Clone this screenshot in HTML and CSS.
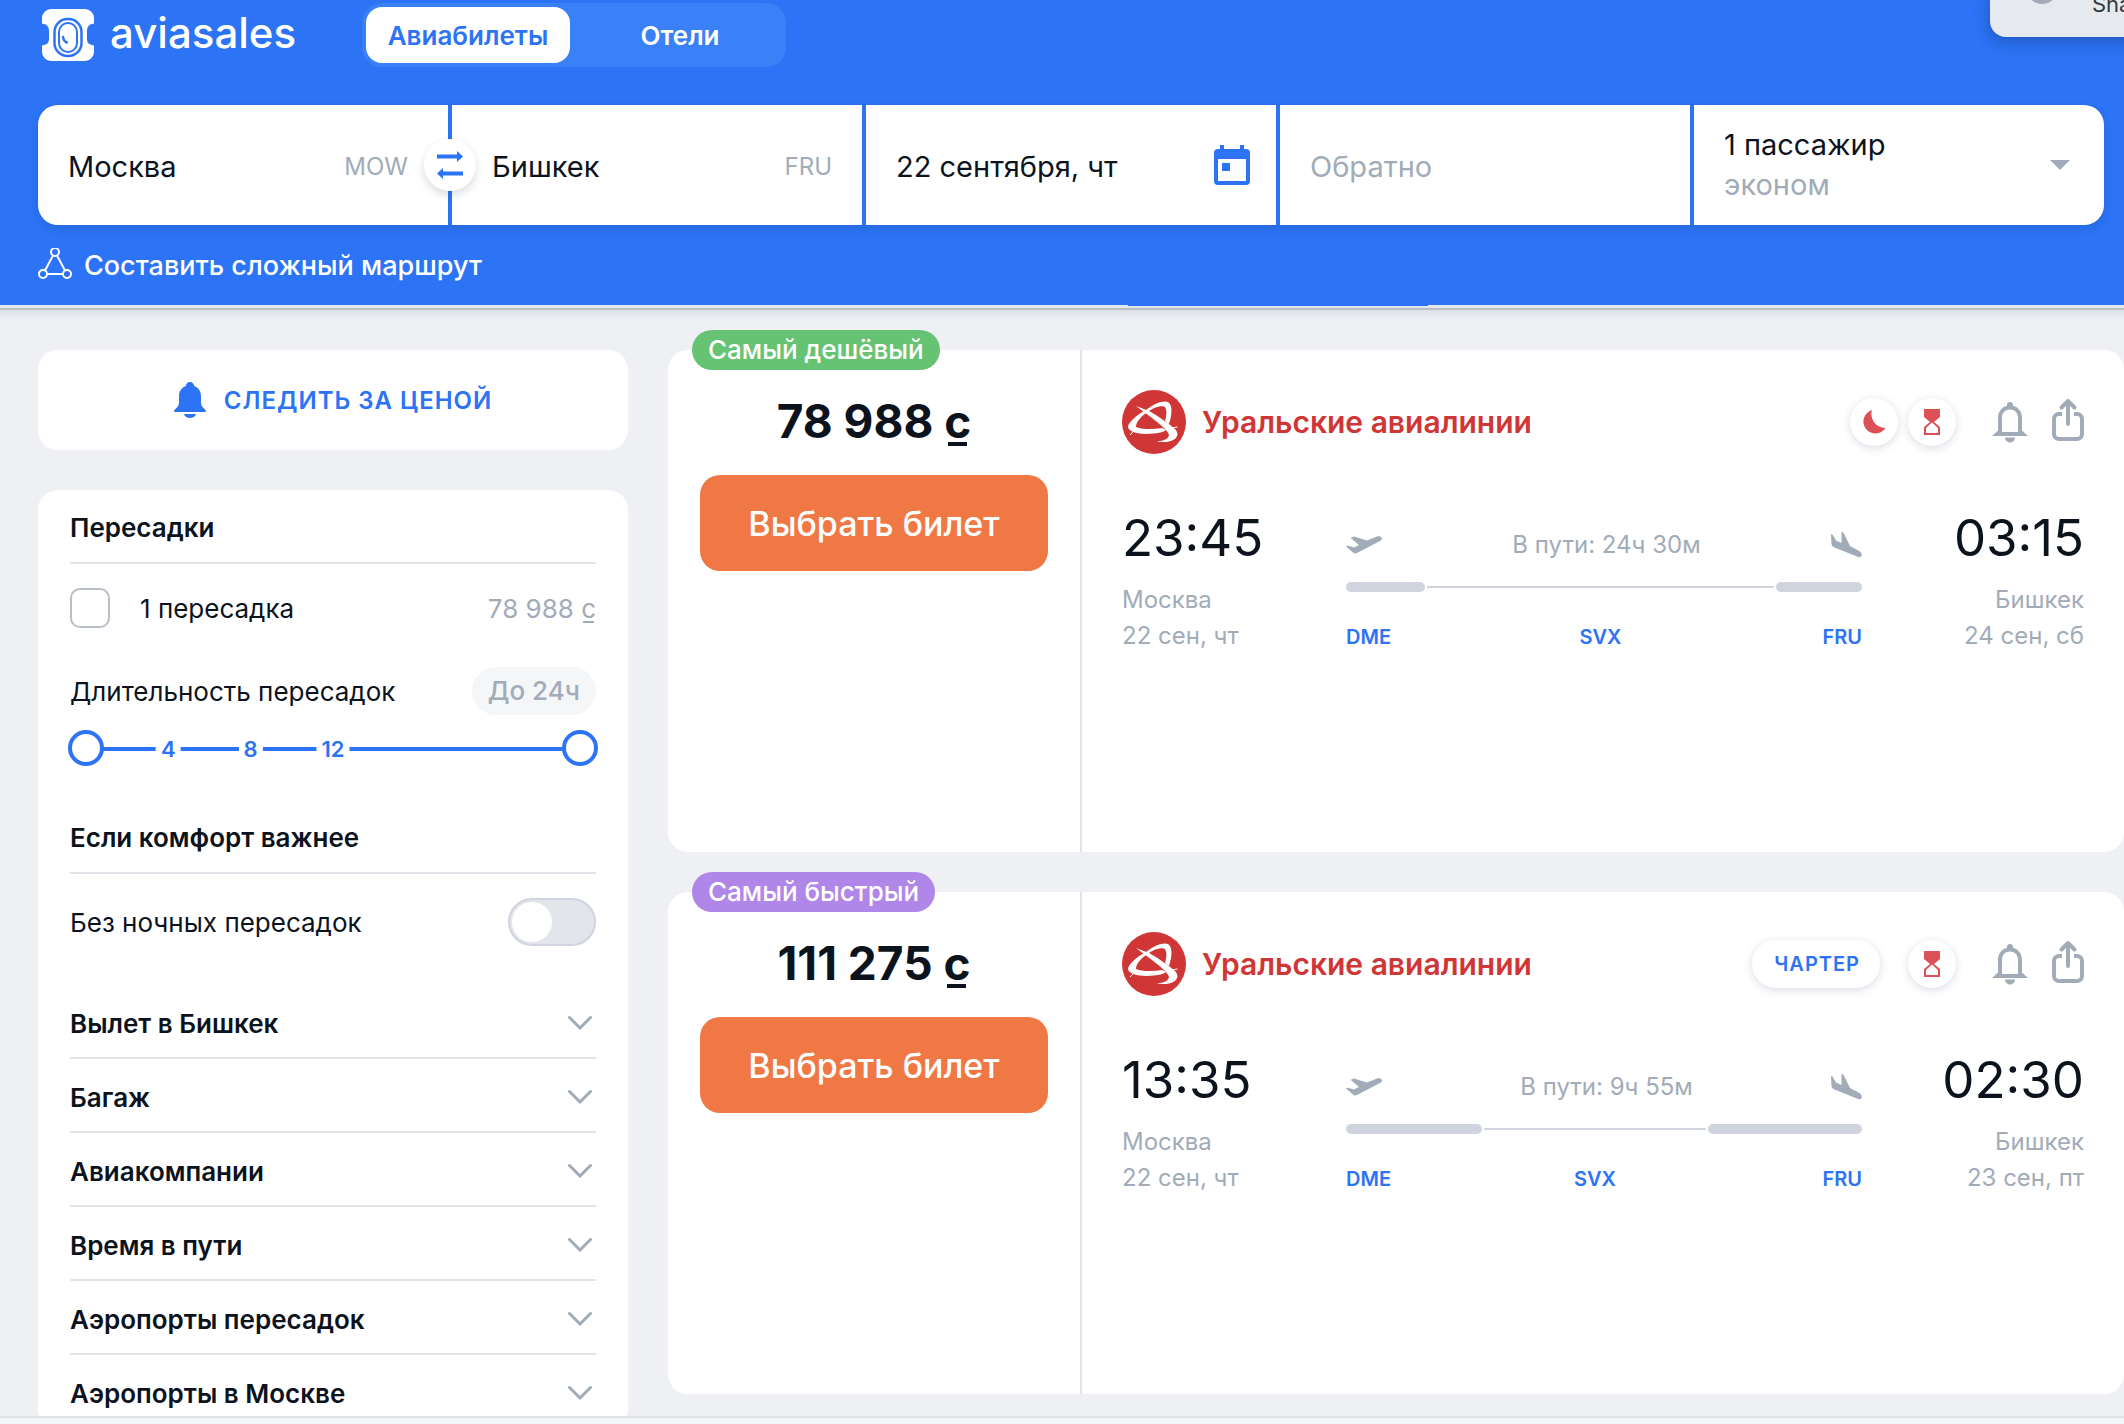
FILE: index.html
```html
<!DOCTYPE html>
<html lang="ru">
<head>
<meta charset="utf-8">
<meta name="viewport" content="width=device-width, initial-scale=1">
<title>Москва — Бишкек, авиабилеты</title>
<link rel="stylesheet" href="styles.css">
</head>
<body>
<svg class="sprite" aria-hidden="true">
  <symbol id="i-bell" viewBox="0 0 36 42">
    <path d="M18 1a3 3 0 0 1 3 3v3h-6V4a3 3 0 0 1 3-3z" fill="currentColor"/>
    <path fill-rule="evenodd" d="M18 4.500c7.500 0 12 5.500 12 12.500v12.500l6 5.500H0l6-5.500V17C6 10 10.500 4.500 18 4.500zM18 8.500c-5 0-8 3.500-8 8.500v14h16V17c0-5-3-8.500-8-8.500z" fill="currentColor"/>
    <path d="M13 36.500h10c0 2.500-2 5-5 5s-5-2.500-5-5z" fill="currentColor"/>
  </symbol>
  <symbol id="i-share" viewBox="0 0 32 44">
    <path d="M10 17H7a5 5 0 0 0-5 5v15a5 5 0 0 0 5 5h18a5 5 0 0 0 5-5V22a5 5 0 0 0-5-5h-3" fill="none" stroke="currentColor" stroke-width="4"/>
    <path d="M16 27V4M9.500 10.500L16 4l6.500 6.500" fill="none" stroke="currentColor" stroke-width="4" stroke-linecap="round" stroke-linejoin="round"/>
  </symbol>
  <symbol id="i-hourglass" viewBox="0 0 16 26">
    <path d="M0 0h16v8l-6 5 6 5v8H0v-8l6-5-6-5z" fill="currentColor"/>
    <path d="M2 24h12v-5l-6-5.500L2 19z" fill="#fff"/>
  </symbol>
  <symbol id="i-moon" viewBox="0 0 24 24">
    <path d="M10 0A12 12 0 1 0 23.500 18 14 14 0 0 1 10 0z" fill="currentColor"/>
  </symbol>
  <symbol id="i-takeoff" viewBox="0 0 36 18">
    <path d="M0 10.500l2-.8 6 1.700 5-2.300L4.500 1.800 8 .5l13 4L31 .6c3-1 5 .2 5 2 0 1.200-1 2-2 2.500L11 17c-1.500.8-3 .6-4-.4z" fill="currentColor"/>
  </symbol>
  <symbol id="i-landing" viewBox="0 0 31 26">
    <path d="M0 2l1.500.5 3.500 6 5.500 2.500V0l2 .8L19 14l8.500 4.500c2.500 1.400 4 4 3 5.500-.8 1.600-2.500 1.400-4 .8L3.500 15.500C1.500 14.600.5 13 .4 11z" fill="currentColor"/>
  </symbol>
  <symbol id="i-chevron" viewBox="0 0 24 14">
    <path d="M1.500 1.500L12 12 22.500 1.500" fill="none" stroke="currentColor" stroke-width="3" stroke-linecap="round"/>
  </symbol>
  <symbol id="i-ural" viewBox="0 0 64 64">
    <circle cx="32" cy="32" r="32" fill="#d13636"/>
    <g fill="#fff">
      <path d="M14 16l13 5c9 5 19 12 26 18 5 5 2 11-6 12.500-5 1-9 .5-12-.5 7 0 11-2 12-6-1-5-11-12-17-17z"/>
      <path d="M24 20C14 25 6 33 6 37c1 6 14 8 26 6.500 6-.5 10-1.500 12-3.500l-4-2c-10 2-22 1-26-1 0-5 5-11 12-15z"/>
      <path d="M24 20c8-7 18-10 22-8 5 3 4 13 1 22l-4-3c2-6 2-13-1-14.500-4-1-12 1.500-16 5.500z"/>
    </g>
    <path d="M8 45l5-5.500M49 38l6.500-1" stroke="#fff" fill="none"/>
  </symbol>
</svg>

<div class="app">
  <header class="header">
    <div class="topbar">
      <a class="logo" href="#">
        <svg class="logo-mark" viewBox="0 0 52 52" aria-hidden="true">
          <path fill="#fff" d="M9 0h34a9 9 0 0 1 9 9v5.500c-6 1-7.500 3.500-7 11.500-.5 8 1 9.500 7 10.500V43a9 9 0 0 1-9 9H9a9 9 0 0 1-9-9v-6.500c6-1 7.500-2.500 7-10.500.5-8-1-10.500-7-11.500V9a9 9 0 0 1 9-9z"/>
          <rect x="12.500" y="10" width="27" height="37" rx="13" fill="none" stroke="#2c73f5" stroke-width="2.500"/>
          <rect x="17" y="14" width="18" height="29" rx="9" fill="none" stroke="#2c73f5" stroke-width="2"/>
          <path d="M21 28c.3 3 1.500 4.500 3.800 5.500" fill="none" stroke="#2c73f5" stroke-width="2.500" stroke-linecap="round"/>
        </svg>
        <span>aviasales</span>
      </a>
      <nav class="tabs">
        <a class="tab tab--active" href="#">Авиабилеты</a>
        <a class="tab" href="#">Отели</a>
      </nav>
    </div>

    <form class="search">
      <label class="field field--from">
        <input class="field-input" type="text" value="Москва" aria-label="Откуда">
        <span class="field-code">MOW</span>
      </label>
      <button class="swap" type="button" aria-label="Поменять местами">
        <svg viewBox="0 0 26 28" width="26" height="28" aria-hidden="true" fill="#2c73f5">
          <path d="M0 3.500h20V0l6 5.500-6 5.500V7.500H0zM26 20.500H6V17l-6 5.500L6 28v-3.500h20z"/>
        </svg>
      </button>
      <label class="field field--to">
        <input class="field-input" type="text" value="Бишкек" aria-label="Куда">
        <span class="field-code">FRU</span>
      </label>
      <label class="field">
        <input class="field-input" type="text" value="22 сентября, чт" aria-label="Туда">
        <svg viewBox="0 0 36 40" width="36" height="40" aria-hidden="true" fill="#2c73f5">
          <path fill-rule="evenodd" d="M6 0h4v4h16V0h4v4h2a4 4 0 0 1 4 4v28a4 4 0 0 1-4 4H4a4 4 0 0 1-4-4V8a4 4 0 0 1 4-4h2zM4 14v22h28V14zM8 18h8v8H8z"/>
        </svg>
      </label>
      <label class="field">
        <input class="field-input" type="text" placeholder="Обратно" aria-label="Обратно">
      </label>
      <button class="field passengers" type="button">
        <span class="passengers-text">
          <span>1 пассажир</span>
          <span class="passengers-class">эконом</span>
        </span>
        <svg viewBox="0 0 20 10" width="20" height="10" aria-hidden="true"><path d="M0 0h20L10 10z" fill="#a2abb8"/></svg>
      </button>
    </form>

    <a class="complex" href="#">
      <svg viewBox="0 0 34 34" width="34" height="34" aria-hidden="true" fill="none" stroke="#fff" stroke-width="2">
        <circle cx="17" cy="4" r="4"/><circle cx="5" cy="26" r="4"/><circle cx="29" cy="26" r="4"/>
        <path d="M15 7.500L7 22.500M19 7.500l8 15M9 26h16"/>
      </svg>
      <span>Составить сложный маршрут</span>
    </a>

    <aside class="toast">
      <svg class="toast-icon" viewBox="0 0 32 32" aria-hidden="true"><circle cx="16" cy="16" r="14" fill="none" stroke="#a4abb6" stroke-width="4"/></svg>
      <span>Sha</span>
    </aside>
  </header>
  <div class="header-edge"><div class="progress"></div></div>

  <main class="main">
    <section class="sidebar">
      <button class="follow" type="button">
        <svg viewBox="0 0 32 36" width="32" height="36" aria-hidden="true" fill="#2c73f5">
          <path d="M16 0c2.500 0 4 2 4.200 4C25 6 27 10 27 14v6c0 4 2 5.500 4.500 8 .8 1 .5 2-.5 2H1c-1 0-1.300-1-.5-2C3 25.500 5 24 5 20v-6c0-4 2-8 6.800-10C12 2 13.500 0 16 0z"/>
          <path d="M10 32h12c-1 5.300-11 5.300-12 0z"/>
        </svg>
        <span>СЛЕДИТЬ ЗА ЦЕНОЙ</span>
      </button>

      <div class="filters">
        <h2 class="filter-title">Пересадки</h2>
        <label class="check-row">
          <input class="check" type="checkbox">
          <span class="check-label">1 пересадка</span>
          <span class="check-price">78&nbsp;988&nbsp;<span class="som">с</span></span>
        </label>
        <div class="range-head">
          <span id="layover">Длительность пересадок</span>
          <span class="range-badge">До 24ч</span>
        </div>
        <div class="range" role="group" aria-labelledby="layover">
          <div class="range-line">
            <span class="range-tick" style="left:16.6667%">4</span>
            <span class="range-tick" style="left:33.3333%">8</span>
            <span class="range-tick" style="left:50%">12</span>
          </div>
          <input class="range-input" type="range" min="0" max="24" value="0" aria-label="От, часов">
          <input class="range-input" type="range" min="0" max="24" value="24" aria-label="До, часов">
        </div>

        <h2 class="filter-title">Если комфорт важнее</h2>
        <label class="toggle-row">
          <span>Без ночных пересадок</span>
          <input class="toggle" type="checkbox" role="switch">
        </label>

        <button class="accordion" type="button"><span>Вылет в Бишкек</span><svg><use href="#i-chevron"/></svg></button>
        <button class="accordion" type="button"><span>Багаж</span><svg><use href="#i-chevron"/></svg></button>
        <button class="accordion" type="button"><span>Авиакомпании</span><svg><use href="#i-chevron"/></svg></button>
        <button class="accordion" type="button"><span>Время в пути</span><svg><use href="#i-chevron"/></svg></button>
        <button class="accordion" type="button"><span>Аэропорты пересадок</span><svg><use href="#i-chevron"/></svg></button>
        <button class="accordion" type="button"><span>Аэропорты в Москве</span><svg><use href="#i-chevron"/></svg></button>
      </div>
    </section>

    <section class="tickets">
      <article class="ticket">
        <span class="label label--cheap">Самый дешёвый</span>
        <div class="offer">
          <div class="price">78&nbsp;988&nbsp;<span class="som">с</span></div>
          <button class="buy" type="button">Выбрать билет</button>
        </div>
        <div class="flight">
          <div class="flight-head">
            <svg class="carrier-logo" aria-hidden="true"><use href="#i-ural"/></svg>
            <h3 class="carrier">Уральские авиалинии</h3>
            <span class="tag tag--round"><svg class="tag-moon"><use href="#i-moon"/></svg></span>
            <span class="tag tag--round"><svg class="tag-hourglass"><use href="#i-hourglass"/></svg></span>
            <div class="actions">
              <button class="action" type="button" aria-label="Следить"><svg class="action-bell"><use href="#i-bell"/></svg></button>
              <button class="action" type="button" aria-label="Поделиться"><svg class="action-share"><use href="#i-share"/></svg></button>
            </div>
          </div>
          <div class="route">
            <div class="point">
              <div class="time">23:45</div>
              <div class="place">Москва</div>
              <div class="place">22 сен, чт</div>
            </div>
            <div class="path">
              <div class="path-head">
                <svg class="takeoff"><use href="#i-takeoff"/></svg>
                <span>В пути: 24ч 30м</span>
                <svg class="landing"><use href="#i-landing"/></svg>
              </div>
              <div class="track">
                <span class="leg" style="flex-grow:79"></span>
                <span class="stop" style="flex-grow:347"><span class="code">SVX</span></span>
                <span class="leg" style="flex-grow:86"></span>
              </div>
              <div class="codes"><span class="code">DME</span><span class="code">FRU</span></div>
            </div>
            <div class="point point--end">
              <div class="time">03:15</div>
              <div class="place">Бишкек</div>
              <div class="place">24 сен, сб</div>
            </div>
          </div>
        </div>
      </article>

      <article class="ticket">
        <span class="label label--fast">Самый быстрый</span>
        <div class="offer">
          <div class="price">111&nbsp;275&nbsp;<span class="som">с</span></div>
          <button class="buy" type="button">Выбрать билет</button>
        </div>
        <div class="flight">
          <div class="flight-head">
            <svg class="carrier-logo" aria-hidden="true"><use href="#i-ural"/></svg>
            <h3 class="carrier">Уральские авиалинии</h3>
            <span class="tag tag--text">ЧАРТЕР</span>
            <span class="tag tag--round"><svg class="tag-hourglass"><use href="#i-hourglass"/></svg></span>
            <div class="actions">
              <button class="action" type="button" aria-label="Следить"><svg class="action-bell"><use href="#i-bell"/></svg></button>
              <button class="action" type="button" aria-label="Поделиться"><svg class="action-share"><use href="#i-share"/></svg></button>
            </div>
          </div>
          <div class="route">
            <div class="point">
              <div class="time">13:35</div>
              <div class="place">Москва</div>
              <div class="place">22 сен, чт</div>
            </div>
            <div class="path">
              <div class="path-head">
                <svg class="takeoff"><use href="#i-takeoff"/></svg>
                <span>В пути: 9ч 55м</span>
                <svg class="landing"><use href="#i-landing"/></svg>
              </div>
              <div class="track">
                <span class="leg" style="flex-grow:136"></span>
                <span class="stop" style="flex-grow:222"><span class="code">SVX</span></span>
                <span class="leg" style="flex-grow:154"></span>
              </div>
              <div class="codes"><span class="code">DME</span><span class="code">FRU</span></div>
            </div>
            <div class="point point--end">
              <div class="time">02:30</div>
              <div class="place">Бишкек</div>
              <div class="place">23 сен, пт</div>
            </div>
          </div>
        </div>
      </article>
    </section>
  </main>
  <div class="bottom-edge"></div>
</div>
</body>
</html>
```
FILE: styles.css
```css
:root {
  --blue: #2c73f5;
  --ink: #0c131d;
  --muted: #a2abb8;
  --line: #e1e5ea;
  --page: #eef0f4;
  --track: #cfd4de;
}

* { box-sizing: border-box; }

body {
  margin: 0;
  background: var(--page);
  color: var(--ink);
  font-family: Inter, "Liberation Sans", sans-serif;
  font-size: 24px;
}

button, input {
  margin: 0;
  padding: 0;
  border: 0;
  background: none;
  color: inherit;
  font: inherit;
}

button { cursor: pointer; }
a { color: inherit; text-decoration: none; }
svg { display: block; flex: none; }
h2, h3 { margin: 0; font-size: inherit; }

.sprite { position: absolute; width: 0; height: 0; }

.app {
  display: flex;
  flex-direction: column;
  height: 100vh;
  overflow: hidden;
}

/* Header */
.header {
  position: relative;
  flex: none;
  padding: 3px 20px 0 38px;
  background: var(--blue);
  color: #fff;
}

.topbar { display: flex; align-items: center; }

.logo {
  display: flex;
  align-items: center;
  gap: 16px;
  width: 324px;
  padding-left: 4px;
  font-size: 42px;
  font-weight: 500;
  line-height: 48px;
}

.logo span { padding-bottom: 4px; }
.logo-mark { width: 52px; height: 52px; }

.tabs {
  display: flex;
  gap: 8px;
  padding: 4px;
  border-radius: 20px;
  background: #3a80f7;
}

.tab {
  width: 204px;
  padding-top: 2px;
  border-radius: 16px;
  font-size: 26px;
  font-weight: 600;
  line-height: 54px;
  text-align: center;
}

.tab--active { background: #fff; color: var(--blue); }

.search {
  position: relative;
  display: grid;
  grid-template-columns: repeat(5, 1fr);
  gap: 4px;
  margin-top: 38px;
  border-radius: 20px;
  box-shadow: 0 4px 8px rgba(20, 70, 130, 0.2);
}

.field {
  display: flex;
  align-items: center;
  min-width: 0;
  height: 120px;
  padding: 0 26px 0 30px;
  background: #fff;
  color: var(--ink);
  font-size: 29px;
}

.field--from { padding-right: 40px; border-radius: 20px 0 0 20px; }
.field--to { padding: 0 30px 0 40px; }

.field-input { flex: 1; min-width: 0; padding-top: 2px; outline: none; }
.field-input::placeholder { color: var(--muted); opacity: 1; }
.field-code { padding-top: 2px; color: var(--muted); font-size: 24px; }

.swap {
  position: absolute;
  top: 34px;
  left: calc(20% - 27px);
  display: grid;
  place-items: center;
  width: 52px;
  height: 52px;
  border-radius: 50%;
  background: #fff;
  box-shadow: 0 4px 8px rgba(20, 40, 70, 0.16);
}

.passengers {
  justify-content: space-between;
  padding: 0 34px 0 30px;
  border-radius: 0 20px 20px 0;
  text-align: left;
}

.passengers-text { display: grid; line-height: 40px; }
.passengers-class { color: var(--muted); }

.complex {
  display: inline-flex;
  align-items: center;
  gap: 12px;
  height: 80px;
  font-size: 27px;
  font-weight: 500;
}

.toast {
  position: absolute;
  top: -16px;
  right: -44px;
  display: flex;
  align-items: center;
  gap: 34px;
  width: 178px;
  height: 53px;
  padding: 0 0 14px 36px;
  border-radius: 16px;
  background: #e6e9ed;
  box-shadow: 0 4px 16px rgba(0, 20, 60, 0.3);
  color: #34373c;
  font-size: 22px;
}

.toast-icon {
  align-self: flex-start;
  width: 32px;
  height: 32px;
  margin-top: -12px;
}

.header-edge {
  flex: none;
  height: 15px;
  background: linear-gradient(#e4e7eb 3px, #b9bfc7 3px, #b9bfc7 5px, #dde1e6 5px, var(--page));
}

.progress {
  width: 300px;
  height: 1px;
  margin-left: 1128px;
  background: var(--blue);
}

/* Page body */
.main {
  display: flex;
  flex: 1;
  gap: 40px;
  min-height: 0;
  padding: 30px 0 0 38px;
  overflow: hidden;
}

.bottom-edge {
  flex: none;
  height: 8px;
  border-top: 2px solid #dfe2e8;
  background: #f4f5f8;
}

/* Sidebar */
.sidebar { flex: none; width: 590px; }

.follow {
  display: flex;
  align-items: center;
  justify-content: center;
  gap: 18px;
  width: 100%;
  height: 100px;
  border-radius: 20px;
  background: #fff;
  color: var(--blue);
  font-size: 24px;
  font-weight: 600;
  letter-spacing: 1px;
}

.filters {
  margin-top: 40px;
  padding: 0 32px;
  border-radius: 20px;
  background: #fff;
  font-size: 26px;
}

.filter-title {
  padding: 4px 0 0;
  border-bottom: 2px solid var(--line);
  font-weight: 600;
  line-height: 68px;
}

.check-row {
  display: flex;
  align-items: center;
  gap: 30px;
  height: 88px;
}

.check {
  appearance: none;
  width: 40px;
  height: 40px;
  border: 2px solid #b9bfc9;
  border-radius: 10px;
}

.check-label { flex: 1; }
.check-price { color: var(--muted); }

.som { position: relative; }

.som::after {
  content: "";
  position: absolute;
  right: 15%;
  bottom: 1px;
  left: 15%;
  height: 2px;
  background: currentColor;
}

.range-head {
  display: flex;
  align-items: center;
  justify-content: space-between;
  height: 78px;
}

.range-badge {
  padding: 0 16px;
  border-radius: 24px;
  background: #f5f6f8;
  color: var(--muted);
  font-weight: 500;
  line-height: 48px;
}

.range {
  display: grid;
  height: 36px;
  margin: 0 -2px 34px;
}

.range-line {
  grid-area: 1 / 1;
  position: relative;
  align-self: center;
  height: 4px;
  margin: 2px 18px 0;
  background: var(--blue);
}

.range-tick {
  position: absolute;
  top: 50%;
  padding: 0 5px;
  background: #fff;
  color: var(--blue);
  font-size: 22px;
  font-weight: 600;
  line-height: 26px;
  transform: translate(-50%, -50%);
}

.range-input {
  grid-area: 1 / 1;
  z-index: 1;
  appearance: none;
  width: 100%;
  height: 36px;
  pointer-events: none;
}

.range-input::-webkit-slider-thumb {
  appearance: none;
  width: 36px;
  height: 36px;
  border: 4px solid var(--blue);
  border-radius: 50%;
  background: #fff;
  pointer-events: auto;
}

.toggle-row {
  display: flex;
  align-items: center;
  justify-content: space-between;
  height: 96px;
  margin-bottom: 15px;
}

.toggle {
  appearance: none;
  width: 88px;
  height: 48px;
  border: 2px solid var(--track);
  border-radius: 24px;
  background: #e2e6eb;
}

.toggle::before {
  content: "";
  display: block;
  width: 40px;
  height: 40px;
  margin: 2px;
  border-radius: 50%;
  background: #fff;
}

.accordion {
  display: flex;
  align-items: center;
  justify-content: space-between;
  width: 100%;
  height: 74px;
  padding: 4px 4px 0 0;
  border-bottom: 2px solid var(--line);
  font-weight: 600;
}

.accordion svg { width: 24px; height: 14px; color: var(--muted); }

/* Tickets */
.tickets {
  display: flex;
  flex: 1;
  flex-direction: column;
  gap: 40px;
  min-width: 0;
}

.ticket {
  position: relative;
  display: flex;
  flex: none;
  min-height: 502px;
  border-radius: 20px;
  background: #fff;
}

.label {
  position: absolute;
  top: -20px;
  left: 24px;
  padding: 0 16px;
  border-radius: 20px;
  color: #fff;
  font-size: 26px;
  font-weight: 500;
  line-height: 40px;
}

.label--cheap { background: #67c374; }
.label--fast { background: #b186e9; }

.offer {
  width: 414px;
  padding: 45px 32px 0;
  border-right: 2px solid var(--line);
}

.price {
  font-size: 46px;
  font-weight: 700;
  line-height: 52px;
  text-align: center;
}

.price .som::after { bottom: 3px; height: 4px; }

.buy {
  width: 100%;
  height: 96px;
  margin-top: 28px;
  border-radius: 20px;
  background: #f07845;
  color: #fff;
  font-size: 34px;
  font-weight: 500;
}

.flight { flex: 1; padding: 40px; }

.flight-head {
  display: flex;
  align-items: center;
  gap: 10px;
  height: 64px;
}

.carrier-logo { width: 64px; height: 64px; }

.carrier {
  flex: 1;
  padding-left: 6px;
  color: #d13636;
  font-size: 30px;
  font-weight: 600;
}

.tag {
  display: grid;
  place-items: center;
  height: 48px;
  border-radius: 24px;
  box-shadow: 0 2px 8px rgba(20, 40, 80, 0.16);
  color: #dc5058;
}

.tag--round { width: 48px; }

.tag--text {
  margin-right: 18px;
  padding: 0 20px 0 22px;
  color: var(--blue);
  font-size: 20px;
  font-weight: 600;
  letter-spacing: 1px;
}

.tag-moon { width: 24px; height: 24px; }
.tag-hourglass { width: 16px; height: 26px; }

.actions {
  display: flex;
  align-items: center;
  gap: 24px;
  margin-left: 26px;
  color: var(--muted);
}

.action-bell { width: 36px; height: 42px; }
.action-share { width: 32px; height: 44px; margin-bottom: 6px; }

.route {
  display: grid;
  grid-template-columns: 224px 1fr 222px;
  margin-top: 52px;
}

.point--end { text-align: right; }

.time {
  margin-bottom: 12px;
  font-size: 51px;
  line-height: 64px;
}

.place { color: var(--muted); line-height: 36px; }

.path { padding-top: 21px; color: var(--muted); }

.path-head {
  display: flex;
  align-items: center;
  justify-content: space-between;
  line-height: 36px;
}

.takeoff { width: 36px; height: 18px; }
.landing { width: 31px; height: 26px; }

.track {
  display: flex;
  align-items: center;
  gap: 2px;
  height: 10px;
  margin: 19px 0 33px;
}

.leg {
  flex-basis: 0;
  height: 10px;
  border-radius: 5px;
  background: var(--track);
}

.stop {
  position: relative;
  flex-basis: 0;
  height: 2px;
  background: var(--track);
}

.stop .code {
  position: absolute;
  top: 39px;
  left: 50%;
  transform: translateX(-50%);
}

.codes { display: flex; justify-content: space-between; }

.code {
  color: var(--blue);
  font-size: 20px;
  font-weight: 600;
  line-height: 24px;
}
```
